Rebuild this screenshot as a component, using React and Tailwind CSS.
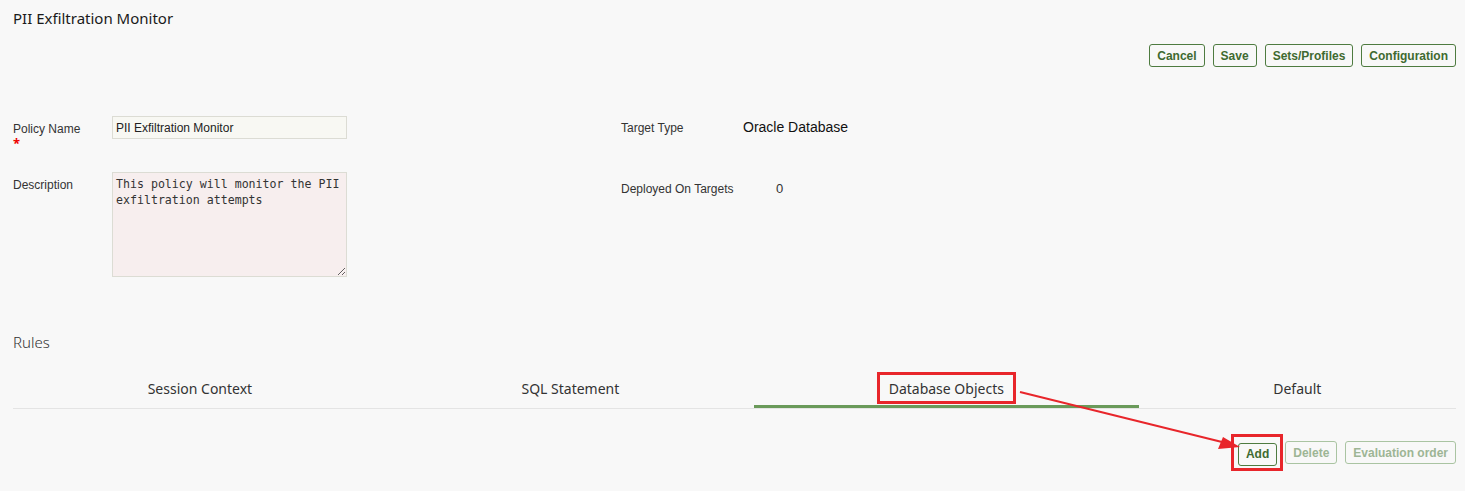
import { useState } from 'react';

const btn = 'h-[23px] px-[7px] rounded-[3px] border text-[12px] font-bold leading-none bg-[#f8f8f8]';
const btnOn = `${btn} border-[#4e7b40] text-[#3f6a30]`;
const btnOff = `${btn} border-[#aac4a2] text-[#9db595]`;
const label = "text-[12px] text-[#333] font-['Liberation_Sans',Arial,sans-serif]";

const tabs = ['Session Context', 'SQL Statement', 'Database Objects', 'Default'];

export default function App() {
  const [active, setActive] = useState(2);

  return (
    <div className="relative w-[1465px] h-[491px] bg-[#f8f8f8] overflow-hidden font-['Noto_Sans',sans-serif] text-[#222]">
      <div className="pl-[13px] pr-[9px]">
        <h1 className="pt-[8px] text-[15px] leading-[20px] text-[#1a1a1a]">PII Exfiltration Monitor</h1>

        <div className="flex justify-end gap-[8px] mt-[16px] font-['Liberation_Sans',Arial,sans-serif]">
          <button className={btnOn}>Cancel</button>
          <button className={btnOn}>Save</button>
          <button className={btnOn}>Sets/Profiles</button>
          <button className={btnOn}>Configuration</button>
        </div>

        <div className="flex mt-[49px]">
          <div className="w-[608px] flex flex-col gap-[24px]">
            <div className="flex">
              <div className="w-[99px] pt-[4px]">
                <div className={label}>Policy Name</div>
                <div className="text-[#e00] text-[13px] leading-[10px] font-bold">*</div>
              </div>
              <input
                defaultValue="PII Exfiltration Monitor"
                className="w-[235px] h-[23px] px-[3px] border border-[#dcdcd4] bg-[#f8f8f3] text-[12px] text-[#222] font-['Liberation_Sans',Arial,sans-serif] outline-none"
              />
            </div>
            <div className="flex">
              <div className={`w-[99px] pt-[4px] ${label}`}>Description</div>
              <textarea
                defaultValue={'This policy will monitor the PII exfiltration attempts'}
                className="w-[235px] h-[105px] px-[3px] py-[3px] border border-[#dcdcd4] bg-[#f7eeee] text-[11.6px] leading-[16px] text-[#333] font-['DejaVu_Sans_Mono',monospace] outline-none"
              />
            </div>
          </div>

          <div className="flex flex-col gap-[41px] pt-[1px]">
            <div className="flex items-center">
              <div className={`w-[122px] ${label}`}>Target Type</div>
              <div className="text-[14px] text-[#111] font-['Liberation_Sans',Arial,sans-serif]">Oracle Database</div>
            </div>
            <div className="flex items-center">
              <div className={`w-[155px] ${label}`}>Deployed On Targets</div>
              <div className="text-[13px] text-[#333] font-['Liberation_Sans',Arial,sans-serif]">0</div>
            </div>
          </div>
        </div>

        <h2 className="mt-[55px] text-[15px] leading-[20px] font-light text-[#333]">Rules</h2>

        <div className="flex mt-[21px] border-b border-[#e4e4e4]">
          {tabs.map((t, i) => (
            <button
              key={t}
              onClick={() => setActive(i)}
              className={`flex-auto h-[35px] flex items-start justify-center pt-[5px] text-[14px] text-[#333] border-b-[3px] ${i === active ? 'border-[#6a9a5a]' : 'border-transparent'}`}
            >
              <span className={i === 2 ? 'relative' : ''}>
                {t}
                {i === 2 && (
                  <span className="absolute -left-[12px] -right-[12px] -top-[6px] -bottom-[5px] border-[3px] border-[#e8262b]" />
                )}
              </span>
            </button>
          ))}
        </div>

        <div className="flex justify-end gap-[8px] mt-[32px] font-['Liberation_Sans',Arial,sans-serif]">
          <span className="relative">
            <button className={btnOn}>Add</button>
            <span className="absolute -left-[7px] -right-[6px] -top-[7px] -bottom-[5px] border-[3px] border-[#e8262b]" />
          </span>
          <button className={btnOff}>Delete</button>
          <button className={btnOff}>Evaluation order</button>
        </div>
      </div>

      <svg className="absolute left-0 top-0 pointer-events-none" width="1465" height="491">
        <line x1="1020" y1="392" x2="1222" y2="442" stroke="#e8262b" strokeWidth="2" />
        <polygon points="1240,447 1218,449 1223,437" fill="#e8262b" />
      </svg>
    </div>
  );
}
